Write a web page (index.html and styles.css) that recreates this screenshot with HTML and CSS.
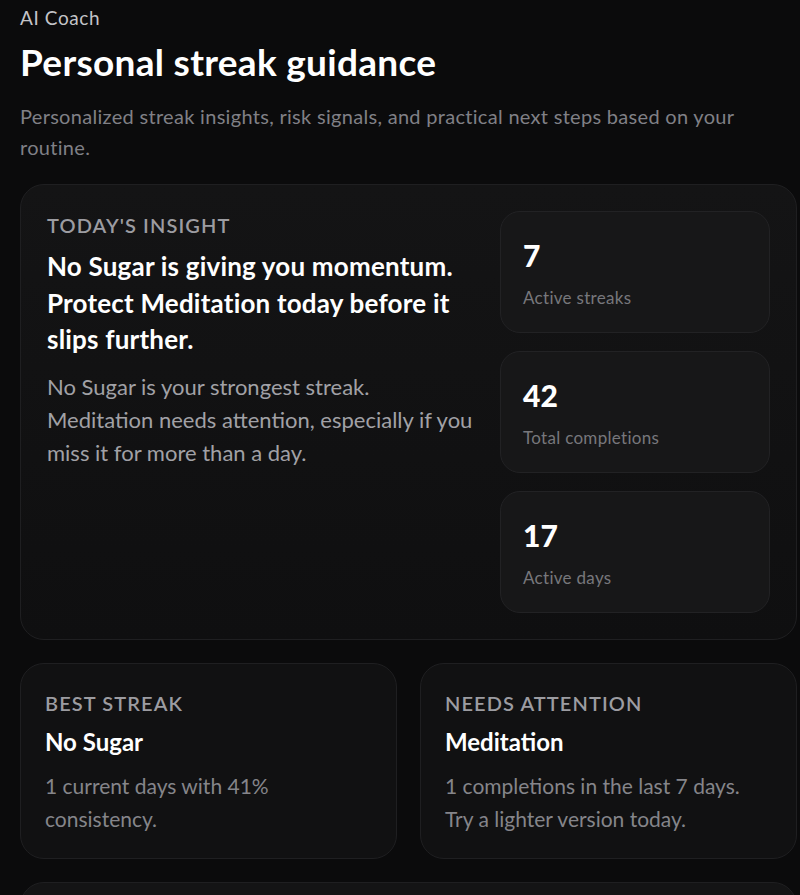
FILE: index.html
```html
<!DOCTYPE html>
<html lang="en">
<head>
<meta charset="utf-8">
<title>AI Coach</title>
<link rel="stylesheet" href="styles.css">
</head>
<body>
<main class="page">
  <header class="head">
    <div class="eyebrow">AI Coach</div>
    <h1 class="title">Personal streak guidance</h1>
    <p class="subtitle">Personalized streak insights, risk signals, and practical next steps based on your routine.</p>
  </header>

  <section class="card hero">
    <div class="insight">
      <div class="label">Today's insight</div>
      <h2 class="insight-title">No Sugar is giving you momentum. Protect Meditation today before it slips further.</h2>
      <p class="insight-body">No Sugar is your strongest streak. Meditation needs attention, especially if you miss it for more than a day.</p>
    </div>
    <div class="stats">
      <div class="stat">
        <div class="stat-num">7</div>
        <div class="stat-label">Active streaks</div>
      </div>
      <div class="stat">
        <div class="stat-num">42</div>
        <div class="stat-label">Total completions</div>
      </div>
      <div class="stat">
        <div class="stat-num">17</div>
        <div class="stat-label">Active days</div>
      </div>
    </div>
  </section>

  <section class="pair">
    <div class="card small">
      <div class="label">Best streak</div>
      <h3 class="small-title">No Sugar</h3>
      <p class="small-body">1 current days with 41% consistency.</p>
    </div>
    <div class="card small">
      <div class="label">Needs attention</div>
      <h3 class="small-title">Meditation</h3>
      <p class="small-body">1 completions in the last 7 days. Try a lighter version today.</p>
    </div>
  </section>

  <section class="card next"></section>
</main>
</body>
</html>
```
FILE: styles.css
```css
* { box-sizing: border-box; }
html, body { margin: 0; padding: 0; }
body {
  background: #0b0b0c;
  color: #f4f4f5;
  font-family: "Lato", "Liberation Sans", sans-serif;
}
.page {
  padding: 5px 3px 0 20px;
  display: flex;
  flex-direction: column;
  height: 895px;
  overflow: hidden;
}
.head { display: flex; flex-direction: column; }
.eyebrow {
  font-size: 19px;
  line-height: 26px;
  letter-spacing: 0.6px;
  color: #c4c4c8;
}
.title {
  margin: 9px 0 0;
  font-size: 37px;
  line-height: 44px;
  font-weight: 700;
  letter-spacing: 0.3px;
  color: #ffffff;
}
.subtitle {
  margin: 17px 0 0;
  font-size: 20px;
  line-height: 31px;
  letter-spacing: 0.3px;
  color: #808086;
  max-width: 740px;
}
.card {
  border: 1px solid #1f1f21;
  background: #111112;
  border-radius: 24px;
}
.hero {
  margin-top: 21px;
  padding: 26px;
  display: grid;
  grid-template-columns: 1fr 270px;
  column-gap: 18px;
  background: linear-gradient(180deg, #141415 0%, #0f0f10 100%);
}
.label {
  font-size: 20px;
  line-height: 28px;
  text-transform: uppercase;
  letter-spacing: 1.1px;
  color: #9c9ca1;
  font-weight: 600;
}
.insight-title {
  margin: 9px 0 0;
  font-size: 26px;
  line-height: 36.5px;
  font-weight: 700;
  color: #ffffff;
  letter-spacing: 0.2px;
  max-width: 428px;
}
.insight-body {
  margin: 12px 0 0;
  font-size: 22px;
  line-height: 33px;
  letter-spacing: 0;
  color: #a1a1a6;
  max-width: 430px;
}
.stats {
  display: flex;
  flex-direction: column;
  gap: 18px;
}
.stat {
  background: #171718;
  border: 1px solid #222224;
  border-radius: 20px;
  padding: 25px 22px 22px;
  display: flex;
  flex-direction: column;
  gap: 13px;
}
.stat-num {
  font-size: 30px;
  line-height: 36px;
  font-weight: 900;
  color: #ffffff;
}
.stat-label {
  font-size: 17px;
  line-height: 24px;
  letter-spacing: 0.3px;
  color: #77777c;
}
.pair {
  margin-top: 23px;
  display: grid;
  grid-template-columns: 1fr 1fr;
  gap: 23px;
}
.small {
  padding: 25px 24px 23px;
  display: flex;
  flex-direction: column;
}
.small-title {
  margin: 9px 0 0;
  font-size: 24px;
  line-height: 32px;
  font-weight: 700;
  color: #ffffff;
  letter-spacing: 0;
}
.small-body {
  margin: 11px 0 0;
  font-size: 21px;
  line-height: 33px;
  letter-spacing: 0;
  color: #85858a;
}
.next {
  margin-top: 23px;
  flex: 0 0 60px;
  background: #141415;
}
```
